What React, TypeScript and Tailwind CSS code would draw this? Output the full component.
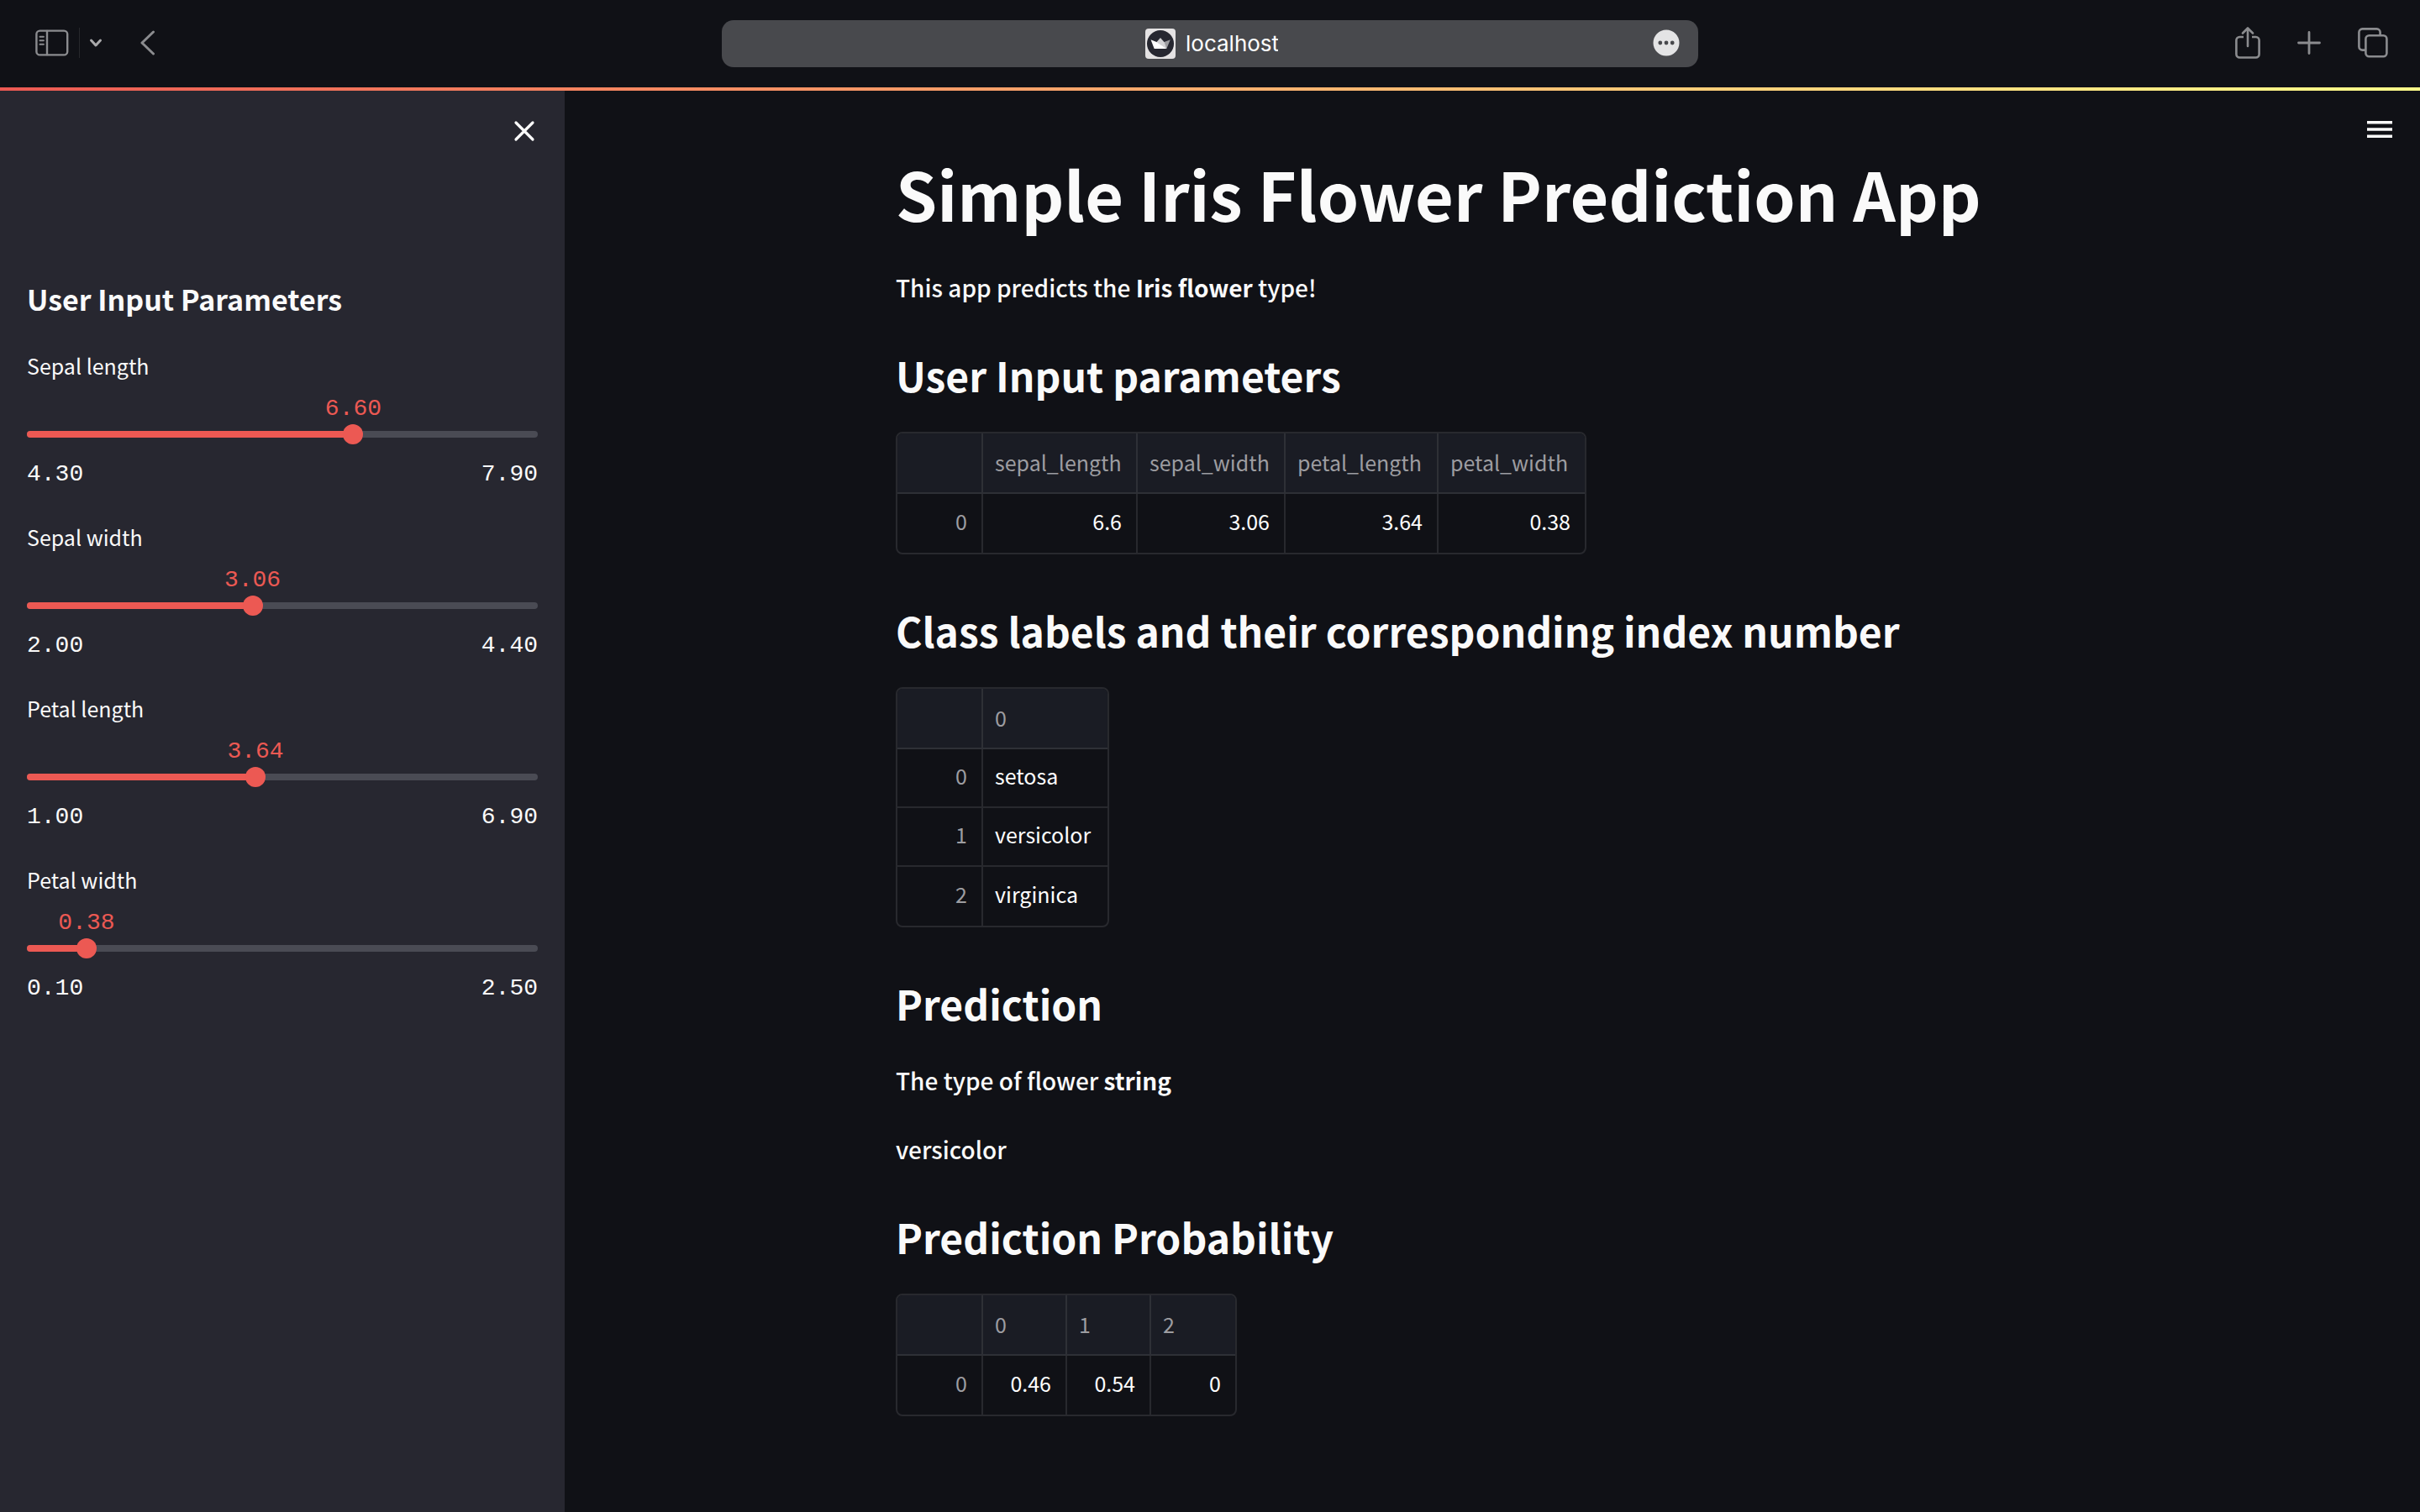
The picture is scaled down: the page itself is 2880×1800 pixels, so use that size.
import { useState } from "react";

const GREY = "#8b8c8f";

function SidebarIcon() {
  return (
    <svg width="40" height="32" viewBox="0 0 40 32" fill="none" stroke={GREY} strokeWidth="2.4" strokeLinecap="round">
      <rect x="1.4" y="1.6" width="36.8" height="28.8" rx="4" />
      <path d="M14 2v28" />
      <path d="M5.5 8.7h4.4M5.5 13.2h4.4M5.5 17.7h4.4" strokeWidth="2" />
    </svg>
  );
}

function ChevronDownIcon() {
  return (
    <svg width="16" height="12" viewBox="0 0 16 12" fill="none" stroke="#a9a9ab" strokeWidth="3" strokeLinecap="round" strokeLinejoin="round">
      <path d="M2.5 3 8 9l5.500-6" />
    </svg>
  );
}

function BackIcon() {
  return (
    <svg width="18" height="30" viewBox="0 0 18 30" fill="none" stroke={GREY} strokeWidth="3" strokeLinecap="round" strokeLinejoin="round">
      <path d="M15.500 2 2 15l13.500 13" />
    </svg>
  );
}

function ShareIcon() {
  return (
    <svg width="30" height="38" viewBox="0 0 30 38" fill="none" stroke={GREY} strokeWidth="2.6" strokeLinecap="round" strokeLinejoin="round">
      <path d="M10 12H5.300A4 4 0 0 0 1.400 16v16.500a4 4 0 0 0 4 4h19.200a4 4 0 0 0 4-4V16a4 4 0 0 0-4-4H20" strokeLinecap="butt" />
      <path d="M15 23V2M9 7.500l6-6 6 6" />
    </svg>
  );
}

function PlusIcon() {
  return (
    <svg width="28" height="28" viewBox="0 0 28 28" fill="none" stroke={GREY} strokeWidth="2.8" strokeLinecap="round">
      <path d="M14 1.500v25M1.500 14h25" />
    </svg>
  );
}

function TabsIcon() {
  return (
    <svg width="36" height="36" viewBox="0 0 36 36" fill="none" stroke={GREY} strokeWidth="2.6">
      <rect x="9.400" y="9.200" width="25" height="25" rx="4" />
      <path d="M9 26.600H5.400a4 4 0 0 1-4-4V5.400a4 4 0 0 1 4-4h17.200a4 4 0 0 1 4 4V9" />
    </svg>
  );
}

function CrownIcon() {
  return (
    <svg width="36" height="36" viewBox="0 0 36 36">
      <rect width="36" height="36" rx="4" fill="#e4e2e3" />
      <circle cx="18" cy="18" r="16" fill="#262730" />
      <path d="M29.800 13.300 25.300 24 18 20l4.500-4z" fill="#9c9ca0" />
      <path d="M18 11l4.800 5.500L25.300 24 13.300 16.300z" fill="#d2d2d4" />
      <path d="M6.500 13.300 14 16.300 25.300 24H10.700z" fill="#ffffff" />
    </svg>
  );
}

function MoreIcon() {
  return (
    <svg width="32" height="32" viewBox="0 0 32 32">
      <circle cx="16" cy="16" r="15.500" fill="#e4e4e5" />
      <g fill="#48494d">
        <circle cx="8.800" cy="16" r="2.400" />
        <circle cx="16" cy="16" r="2.400" />
        <circle cx="23.200" cy="16" r="2.400" />
      </g>
    </svg>
  );
}

function BrowserBar() {
  return (
    <header className="grid h-[104px] grid-cols-[1fr_minmax(0,1162px)_1fr] items-center">
      <div className="flex items-center pb-0.5 pl-[42px]">
        <button type="button" aria-label="Show sidebar"><SidebarIcon /></button>
        <span className="ml-3 h-9 w-px bg-[#27282c]" />
        <button type="button" aria-label="Tab groups" className="ml-[11px]"><ChevronDownIcon /></button>
        <button type="button" aria-label="Back" className="ml-[45px]"><BackIcon /></button>
      </div>
      <div className="grid h-14 grid-cols-[1fr_auto_1fr] items-center rounded-[14px] bg-[#48494d]">
        <span />
        <div className="flex items-center gap-3 pl-1">
          <CrownIcon />
          <input
            aria-label="Address"
            defaultValue="localhost"
            className="w-[110px] bg-transparent font-['Inter',sans-serif] text-[26px] leading-8 text-white outline-none"
          />
        </div>
        <button type="button" aria-label="Page menu" className="mr-[22px] justify-self-end pb-0.5"><MoreIcon /></button>
      </div>
      <div className="flex items-center justify-end gap-[44px] pr-[38px] pb-0.5">
        <button type="button" aria-label="Share"><ShareIcon /></button>
        <button type="button" aria-label="New tab"><PlusIcon /></button>
        <button type="button" aria-label="Tab overview"><TabsIcon /></button>
      </div>
    </header>
  );
}

type Param = { id: string; label: string; min: number; max: number; value: number };

const PARAMS: Param[] = [
  { id: "sepal_length", label: "Sepal length", min: 4.3, max: 7.9, value: 6.6 },
  { id: "sepal_width", label: "Sepal width", min: 2.0, max: 4.4, value: 3.06 },
  { id: "petal_length", label: "Petal length", min: 1.0, max: 6.9, value: 3.64 },
  { id: "petal_width", label: "Petal width", min: 0.1, max: 2.5, value: 0.38 },
];

function Slider({ param, value, onChange }: { param: Param; value: number; onChange: (v: number) => void }) {
  const pct = `${((value - param.min) / (param.max - param.min)) * 100}%`;
  return (
    <div className="flex flex-col pb-9">
      <label htmlFor={param.id} className="text-[25px] leading-[40px]">{param.label}</label>
      <div className="relative mt-[50px] h-6">
        <output
          htmlFor={param.id}
          style={{ left: pct }}
          className="absolute bottom-6 -translate-x-1/2 font-['Liberation_Mono',monospace] text-[28px] leading-9 text-[#ec5953]"
        >
          {value.toFixed(2)}
        </output>
        <div className="absolute inset-x-0 top-2 h-2 overflow-hidden rounded-full bg-[#4a4b54]">
          <div style={{ width: pct }} className="h-full bg-[#ec5953]" />
        </div>
        <input
          id={param.id}
          type="range"
          min={param.min}
          max={param.max}
          step={0.01}
          value={value}
          onChange={(e) => onChange(Number(e.target.value))}
          className="absolute top-0 -left-3 h-6 w-[calc(100%+24px)] appearance-none bg-transparent outline-none [&::-webkit-slider-thumb]:size-6 [&::-webkit-slider-thumb]:appearance-none [&::-webkit-slider-thumb]:rounded-full [&::-webkit-slider-thumb]:bg-[#ec5953]"
        />
      </div>
      <div className="mt-[18px] flex justify-between font-['Liberation_Mono',monospace] text-[28px] leading-9">
        <span>{param.min.toFixed(2)}</span>
        <span>{param.max.toFixed(2)}</span>
      </div>
    </div>
  );
}

type Column = { name: string; width: string };

const INDEX_COLUMN: Column = { name: "", width: "w-[102px]" };

function DataTable({ label, columns, rows, numeric }: { label: string; columns: Column[]; rows: string[][]; numeric?: boolean }) {
  const all = [INDEX_COLUMN, ...columns];
  const cell = "border-r-2 border-b-2 border-[#28292e] pb-1.5 font-normal group-last/row:border-b-0 last:border-r-0";
  return (
    <div className="mb-[10px] self-start overflow-hidden rounded-lg border-2 border-[#28292e]">
      <table aria-label={label} className="table-fixed border-separate border-spacing-0 text-[25px] leading-8">
        <colgroup>
          {all.map((c, i) => <col key={i} className={c.width} />)}
        </colgroup>
        <thead>
          <tr className="h-[72px] bg-[#1a1c24] text-left text-[#9d9da1]">
            {all.map((c, i) => (
              <th key={i} scope="col" className="border-r-2 border-b-2 border-[#2e3036] pb-[3px] pl-[14px] font-normal last:border-r-0">{c.name}</th>
            ))}
          </tr>
        </thead>
        <tbody>
          {rows.map((row, r) => (
            <tr key={r} className="group/row h-[70px]">
              <th scope="row" className={`${cell} pr-[17px] text-right text-[#9d9da1]`}>{r}</th>
              {row.map((v, i) => (
                <td key={i} className={`${cell} text-white ${numeric ? "pr-[17px] text-right" : "pl-[14px]"}`}>{v}</td>
              ))}
            </tr>
          ))}
        </tbody>
      </table>
    </div>
  );
}

function Heading({ children }: { children: string }) {
  return <h2 className="pt-3 text-[48px] leading-[68px] font-bold">{children}</h2>;
}

export default function App() {
  const [values, setValues] = useState(PARAMS.map((p) => p.value));

  return (
    <div className="flex min-h-screen flex-col bg-[#101116] font-['Noto_Sans_CJK_SC',sans-serif] text-[28px] leading-[48px] text-[#fafafa]">
      <BrowserBar />
      <div className="h-1 bg-linear-to-r from-[#ec5953] to-[#fffc8a]" />
      <div className="flex flex-1">
        <aside className="flex w-[672px] shrink-0 flex-col bg-[#272730] px-8 pt-7">
          <button type="button" aria-label="Close sidebar" className="self-end">
            <svg width="32" height="40" viewBox="0 0 32 40" fill="none" stroke="#fafafa" strokeWidth="3.200" strokeLinecap="round">
              <path d="M6 10 26 30M26 10 6 30" />
            </svg>
          </button>
          <h2 className="mt-[155px] mb-[34px] text-[34px] leading-[50px] font-bold">User Input Parameters</h2>
          {PARAMS.map((p, i) => (
            <Slider
              key={p.id}
              param={p}
              value={values[i]}
              onChange={(v) => setValues(values.map((old, j) => (j === i ? v : old)))}
            />
          ))}
        </aside>
        <main className="relative flex flex-1 justify-center pt-[68px]">
          <button type="button" aria-label="Main menu" className="absolute top-9 right-8">
            <svg width="32" height="20" viewBox="0 0 32 20" fill="#fafafa">
              <path d="M1 0h30v3.500H1zM1 8.200h30v3.500H1zM1 16.400h30V20H1z" />
            </svg>
          </button>
          <div className="flex w-full max-w-[1420px] flex-col gap-[34px]">
            <h1 className="text-[79px] leading-[108px] font-bold">Simple Iris Flower Prediction App</h1>
            <p className="font-medium">This app predicts the <strong>Iris flower</strong> type!</p>
            <Heading>User Input parameters</Heading>
            <DataTable
              label="User Input parameters"
              numeric
              columns={[
                { name: "sepal_length", width: "w-[184px]" },
                { name: "sepal_width", width: "w-[176px]" },
                { name: "petal_length", width: "w-[182px]" },
                { name: "petal_width", width: "w-[174px]" },
              ]}
              rows={[values.map(String)]}
            />
            <Heading>Class labels and their corresponding index number</Heading>
            <DataTable
              label="Class labels"
              columns={[{ name: "0", width: "w-[148px]" }]}
              rows={[["setosa"], ["versicolor"], ["virginica"]]}
            />
            <Heading>Prediction</Heading>
            <p className="font-medium">The type of flower <strong>string</strong></p>
            <p className="font-medium">versicolor</p>
            <Heading>Prediction Probability</Heading>
            <DataTable
              label="Prediction Probability"
              numeric
              columns={[
                { name: "0", width: "w-[100px]" },
                { name: "1", width: "w-[100px]" },
                { name: "2", width: "w-[100px]" },
              ]}
              rows={[["0.46", "0.54", "0"]]}
            />
          </div>
        </main>
      </div>
    </div>
  );
}
